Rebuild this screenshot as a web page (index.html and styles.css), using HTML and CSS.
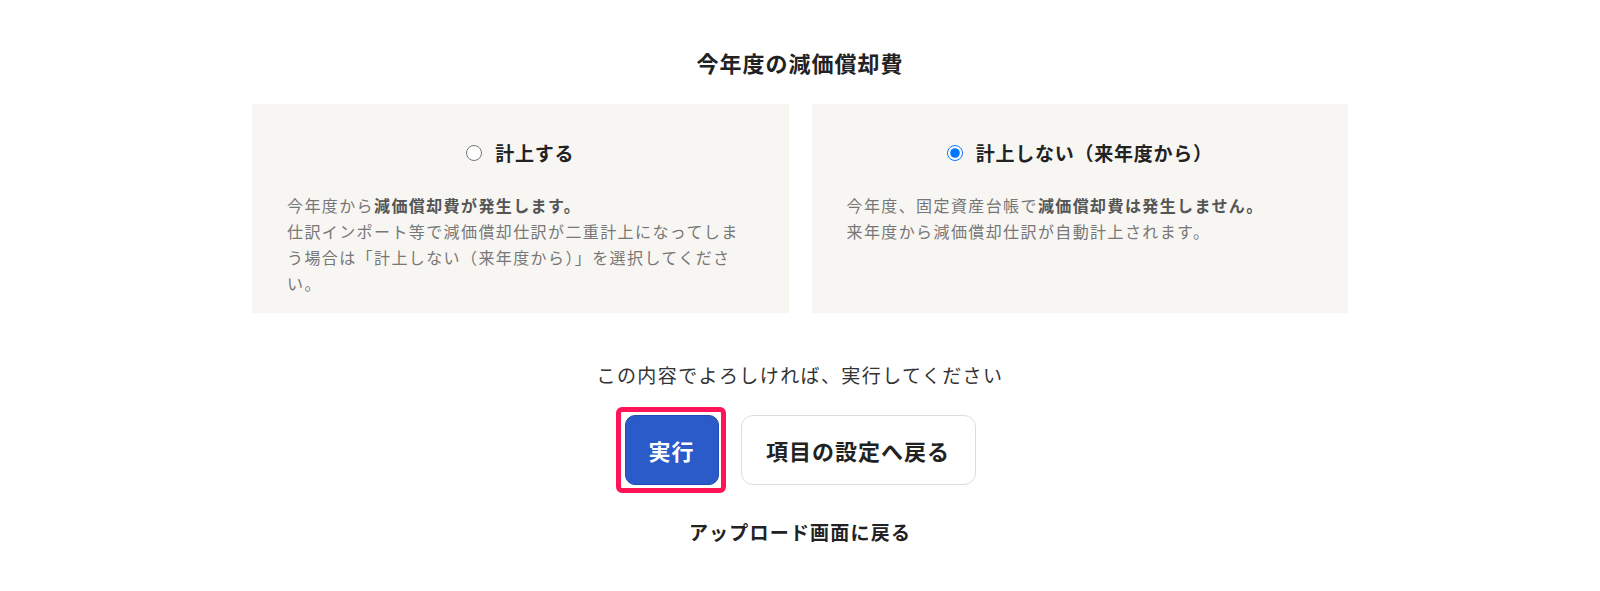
FILE: index.html
```html
<!DOCTYPE html>
<html lang="ja">
<head>
<meta charset="utf-8">
<title>今年度の減価償却費</title>
<link rel="stylesheet" href="styles.css">
</head>
<body>
<main class="page">
  <h2 class="title">今年度の減価償却費</h2>
  <div class="cards">
    <label class="card">
      <span class="radio-row">
        <input class="radio" type="radio" name="dep">
        <span class="radio-label">計上する</span>
      </span>
      <span class="desc">今年度から<b>減価償却費が発生します。</b><br>仕訳インポート等で減価償却仕訳が二重計上になってしまう場合は「計上しない（来年度から）」を選択してください。</span>
    </label>
    <label class="card">
      <span class="radio-row">
        <input class="radio" type="radio" name="dep" checked>
        <span class="radio-label">計上しない（来年度から）</span>
      </span>
      <span class="desc">今年度、固定資産台帳で<b>減価償却費は発生しません。</b><br>来年度から減価償却仕訳が自動計上されます。</span>
    </label>
  </div>
  <p class="notice">この内容でよろしければ、実行してください</p>
  <div class="actions">
    <span class="run-wrap">
      <button class="btn btn-primary" type="button">実行</button>
      <span class="highlight"></span>
    </span>
    <button class="btn btn-secondary" type="button">項目の設定へ戻る</button>
  </div>
  <div class="back"><a class="back-link" href="#">アップロード画面に戻る</a></div>
</main>
</body>
</html>
```
FILE: styles.css
```css
* { box-sizing: border-box; }
html, body {
  margin: 0;
  background: #ffffff;
  font-family: "Noto Sans CJK JP", "Noto Sans", sans-serif;
  color: #222222;
}
.page {
  width: 1096px;
  margin: 0 auto;
  padding-top: 46px;
}
.title {
  margin: 0;
  text-align: center;
  font-size: 22px;
  line-height: 32px;
  font-weight: 700;
  letter-spacing: 1px;
  color: #222222;
}
.cards {
  margin-top: 26px;
  display: grid;
  grid-template-columns: 1fr 1fr;
  gap: 23px;
}
.card {
  display: flex;
  flex-direction: column;
  background: #f7f6f3;
  padding: 35px 35px 17px;
  cursor: pointer;
}
.radio-row {
  display: flex;
  align-items: center;
  justify-content: center;
  gap: 13px;
  height: 28px;
}
.radio {
  width: 16px;
  height: 16px;
  margin: 0;
  accent-color: #0075ff;
}
.radio-label {
  font-size: 19px;
  font-weight: 700;
  letter-spacing: 0.75px;
  line-height: 28px;
  color: #222222;
}
.desc {
  display: block;
  margin-top: 25px;
  font-size: 16px;
  line-height: 26px;
  letter-spacing: 1.4px;
  color: #777777;
}
.desc b {
  color: #555555;
  font-weight: 700;
}
.notice {
  margin: 48px 0 0;
  text-align: center;
  font-size: 19px;
  line-height: 28px;
  letter-spacing: 1.4px;
  color: #333333;
}
.actions {
  margin-top: 26px;
  display: flex;
  justify-content: center;
  gap: 22px;
}
.run-wrap {
  position: relative;
  display: inline-flex;
}
.btn {
  height: 70px;
  font-family: inherit;
  font-size: 22px;
  font-weight: 700;
  letter-spacing: 1px;
  cursor: pointer;
}
.btn-primary {
  width: 94px;
  border: 1px solid #1e4cb5;
  border-radius: 10px;
  background: #2a5bc9;
  color: #ffffff;
}
.btn-secondary {
  width: 235px;
  border: 1px solid #dddddd;
  border-radius: 12px;
  background: #ffffff;
  color: #222222;
}
.highlight {
  position: absolute;
  top: -8px;
  bottom: -8px;
  left: -9px;
  right: -7px;
  border: 5px solid #ff1457;
  border-radius: 6px;
  pointer-events: none;
}
.back {
  margin-top: 33px;
  text-align: center;
}
.back-link {
  font-size: 19px;
  line-height: 28px;
  font-weight: 700;
  letter-spacing: 1.2px;
  color: #222222;
  text-decoration: none;
}
```
